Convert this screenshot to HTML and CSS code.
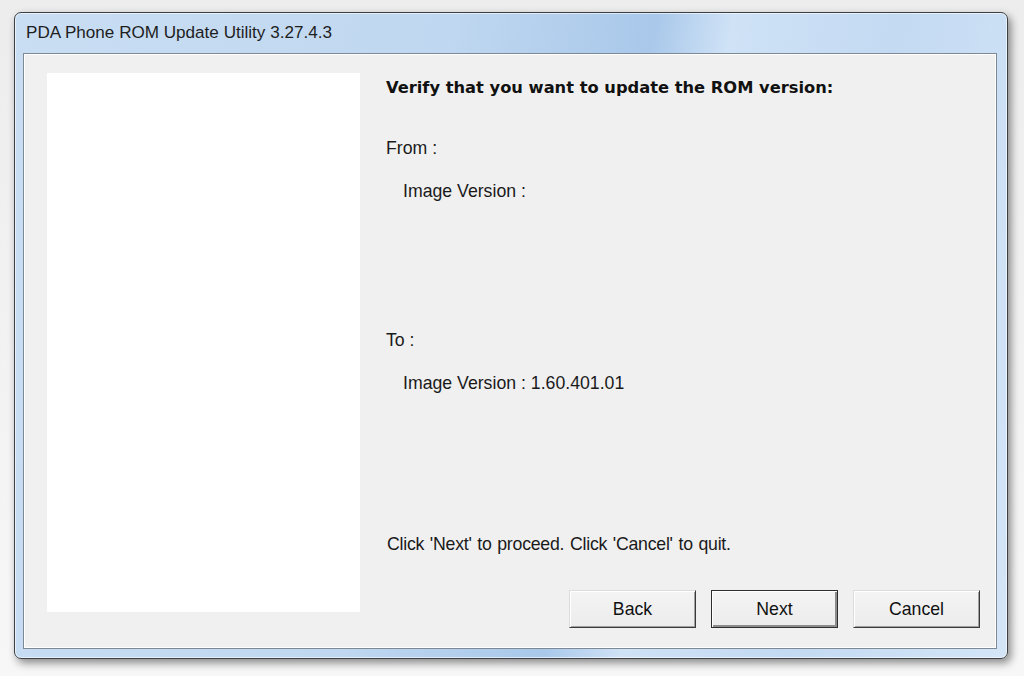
FILE: index.html
```html
<!DOCTYPE html>
<html lang="en">
<head>
  <meta charset="UTF-8" />
  <title>PDA Phone ROM Update Utility 3.27.4.3</title>
  <link rel="stylesheet" href="styles.css">
</head>
<body>
<div class="window">
  <div class="titlebar">PDA Phone ROM Update Utility 3.27.4.3</div>

  <div class="client">
    <div class="side-panel"></div>

    <div class="content">
      <div class="heading">Verify that you want to update the ROM version:</div>

      <div class="label from">From :</div>
      <div class="label sub">Image Version :</div>

      <div class="label to">To :</div>
      <div class="label sub">Image Version : 1.60.401.01</div>

      <div class="label note">Click 'Next' to proceed. Click 'Cancel' to quit.</div>

      <div class="button-row">
        <button class="btn">Back</button>
        <button class="btn default">Next</button>
        <button class="btn">Cancel</button>
      </div>
    </div>
  </div>
</div>
</body>
</html>
```

FILE: styles.css
```css
* { box-sizing: border-box; margin: 0; padding: 0; }

body {
  font-family: "Liberation Sans", Arial, sans-serif;
  background: linear-gradient(#ededed, #f7f7f7);
  width: 1024px;
  height: 676px;
  overflow: hidden;
  padding: 12px 0 0 14px;
}

.window {
  width: 994px;
  height: 647px;
  border: 1px solid #3c3f44;
  border-radius: 7px;
  background: linear-gradient(100deg, #c9def3 0%, #bfd7f0 40%, #a9c8ea 58%, #cfe2f6 65%, #c3daf2 80%, #d4e5f7 100%);
  box-shadow: 3px 4px 8px rgba(0, 0, 0, 0.45), inset 0 0 0 1px rgba(255, 255, 255, 0.6);
  display: flex;
  flex-direction: column;
}

.titlebar {
  height: 40px;
  padding: 10px 0 0 11px;
  font-size: 17.1px;
  color: #1e1e1e;
}

.client {
  flex: 1;
  margin: 0 10px 9px 8px;
  border: 1px solid #7d8995;
  background: #f0f0f0;
  box-shadow: inset 0 0 0 1px #ffffff;
  display: flex;
  padding: 19px 16px 0 23px;
}

.side-panel {
  width: 313px;
  height: 539px;
  background: #ffffff;
  flex-shrink: 0;
}

.content {
  flex: 1;
  padding-left: 26px;
  color: #000000;
}

.heading {
  margin-top: 5px;
  font-family: "DejaVu Sans", Verdana, sans-serif;
  font-size: 16.3px;
  font-weight: bold;
  line-height: 20px;
  color: #111111;
}

.label {
  font-size: 17.7px;
  line-height: 20px;
  color: #1a1a1a;
}
.from { margin-top: 40px; }
.to   { margin-top: 129px; }
.sub  { margin-top: 23px; padding-left: 17px; }
.note { margin-top: 141px; padding-left: 1px; letter-spacing: -0.23px; word-spacing: 1px; }

.button-row {
  display: flex;
  justify-content: flex-end;
  gap: 15px;
  margin-top: 36px;
}

.btn {
  width: 127px;
  height: 38px;
  font-family: "Liberation Sans", Arial, sans-serif;
  font-size: 17.7px;
  color: #111111;
  background: linear-gradient(#f4f4f4, #ececec);
  border-top: 1px solid #dcdcdc;
  border-left: 1px solid #dcdcdc;
  border-right: 1px solid #3a3a3a;
  border-bottom: 1px solid #3a3a3a;
  box-shadow: inset 1px 1px 0 #ffffff, inset -1px -1px 0 #a0a0a0;
}
.btn.default {
  border: 1px solid #2e2e2e;
  box-shadow: inset 1px 1px 0 #ffffff, inset -2px -2px 0 #8c8c8c;
}
```
